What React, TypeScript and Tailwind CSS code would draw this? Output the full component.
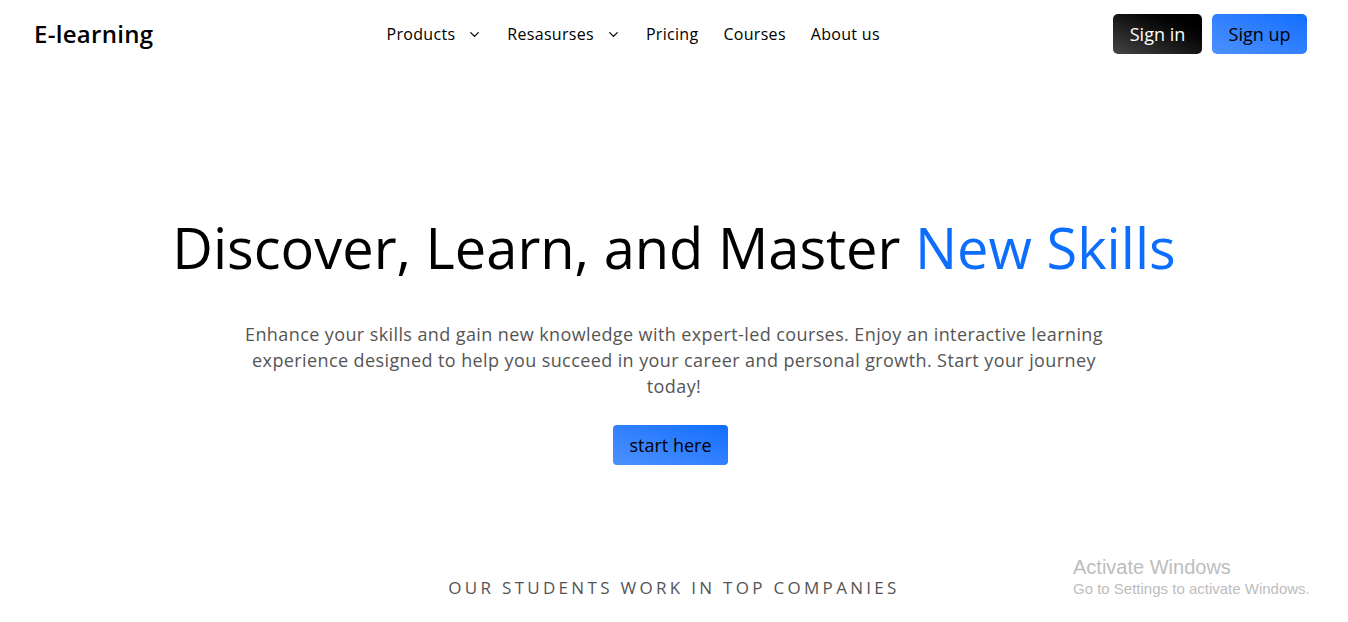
import { ChevronDown } from "lucide-react";

const navLinks = [
  { label: "Products", menu: true },
  { label: "Resasurses", menu: true },
  { label: "Pricing", menu: false },
  { label: "Courses", menu: false },
  { label: "About us", menu: false },
];

export default function App() {
  return (
    <div className="relative min-h-[622px] bg-white font-['Open_Sans',sans-serif] text-black">
      {/* Header */}
      <header className="flex h-[68px] items-center justify-between pl-[34px] pr-[41px]">
        <div className="text-[24px] font-semibold tracking-[0.3px]">E-learning</div>
        <nav className="flex items-center gap-[25px] text-[16px] tracking-[0.3px]">
          {navLinks.map((link) => (
            <a key={link.label} href="#" className="flex items-center gap-[12px]">
              {link.label}
              {link.menu && <ChevronDown className="h-[15px] w-[15px]" strokeWidth={2} />}
            </a>
          ))}
        </nav>
        <div className="flex justify-end gap-[10px] text-[18px]">
          <button className="h-10 w-[89px] rounded-[5px] bg-gradient-to-tr from-[#474747] to-black text-white">
            Sign in
          </button>
          <button className="h-10 w-[95px] rounded-[5px] bg-gradient-to-tr from-[#4b91ff] to-[#0d6efd] text-black">
            Sign up
          </button>
        </div>
      </header>

      {/* Hero */}
      <section className="flex flex-col items-center pt-[143px] text-center">
        <h1 className="text-[56px] font-medium leading-[72px]">
          Discover, Learn, and Master <span className="text-[#0d6efd]">New Skills</span>
        </h1>
        <p className="mt-[38px] max-w-[872px] text-[18px] leading-[26px] tracking-[0.4px] text-[#555]">
          Enhance your skills and gain new knowledge with expert-led courses. Enjoy an interactive learning experience
          designed to help you succeed in your career and personal growth. Start your journey today!
        </p>
        <button className="mr-[7px] mt-[26px] h-10 w-[115px] rounded-[4px] bg-gradient-to-tr from-[#4b91ff] to-[#0d6efd] text-[18px] text-black">
          start here
        </button>
        <h2 className="mt-[110px] text-[17px] uppercase tracking-[3.3px] text-[#555]">
          Our students work in top companies
        </h2>
      </section>

      {/* Windows watermark */}
      <div className="pointer-events-none absolute left-[1073px] top-[554px] font-['Liberation_Sans',sans-serif] text-[#bdbdbd]">
        <p className="text-[20px] leading-[26px]">Activate Windows</p>
        <p className="text-[15px] leading-[18px]">Go to Settings to activate Windows.</p>
      </div>
    </div>
  );
}
